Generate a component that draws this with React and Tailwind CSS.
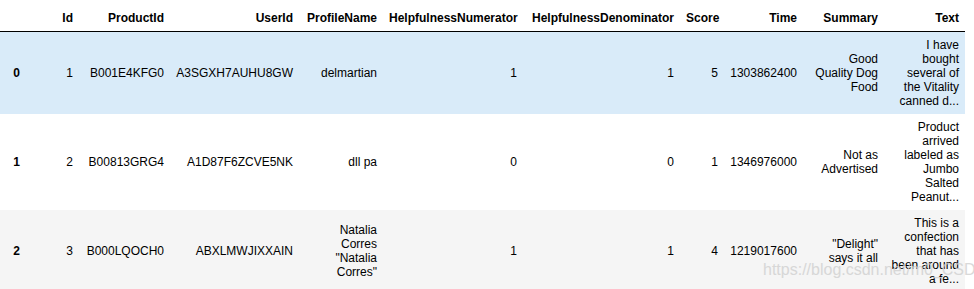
const columns = [
  { name: "", w: "w-[26px]" },
  { name: "Id", w: "w-[53px]" },
  { name: "ProductId", w: "w-[91px]" },
  { name: "UserId", w: "w-[129px]" },
  { name: "ProfileName", w: "w-[84px]" },
  { name: "HelpfulnessNumerator", w: "w-[140px]" },
  { name: "HelpfulnessDenominator", w: "w-[157px]" },
  { name: "Score", w: "w-[44px]" },
  { name: "Time", w: "w-[79px]" },
  { name: "Summary", w: "w-[81px]" },
  { name: "Text", w: "w-[81px]" },
];

const rows = [
  [0, 1, "B001E4KFG0", "A3SGXH7AUHU8GW", "delmartian", 1, 1, 5, 1303862400, "Good Quality Dog Food", "I have bought several of the Vitality canned d..."],
  [1, 2, "B00813GRG4", "A1D87F6ZCVE5NK", "dll pa", 0, 0, 1, 1346976000, "Not as Advertised", "Product arrived labeled as Jumbo Salted Peanut..."],
  [2, 3, "B000LQOCH0", "ABXLMWJIXXAIN", "Natalia Corres \"Natalia Corres\"", 1, 1, 4, 1219017600, "\"Delight\" says it all", "This is a confection that has been around a fe..."],
];

const rowBg = ["bg-[#d9ebf9]", "bg-white", "bg-[#f5f5f5]"];

export default function App() {
  return (
    <div className="relative w-[974px] h-[289px] overflow-hidden bg-white text-black font-['Liberation_Sans',Arial,sans-serif] text-[12px] leading-[14px]">
      <table className="table-fixed border-collapse w-[965px]">
        <colgroup>
          {columns.map((c, i) => (
            <col key={i} className={c.w} />
          ))}
        </colgroup>
        <thead>
          <tr className="border-b border-black">
            {columns.map((c, i) => (
              <th key={i} className="px-[6px] pt-[11px] pb-[6px] text-right align-bottom font-bold whitespace-nowrap">
                {c.name}
              </th>
            ))}
          </tr>
        </thead>
        <tbody>
          {rows.map((r, ri) => (
            <tr key={ri} className={rowBg[ri]}>
              {r.map((v, ci) =>
                ci === 0 ? (
                  <th key={ci} className="px-[6px] py-[6px] text-right align-middle font-bold">
                    {v}
                  </th>
                ) : (
                  <td key={ci} className="px-[6px] py-[6px] text-right align-middle">
                    {v}
                  </td>
                )
              )}
            </tr>
          ))}
        </tbody>
      </table>
      <div className="absolute left-[763px] top-[261px] whitespace-nowrap text-[16px] leading-[18px] text-[#d0d0d0] opacity-80 font-['Liberation_Sans',Arial,sans-serif]">
        https://blog.csdn.net/m0_CSDN
      </div>
    </div>
  );
}
